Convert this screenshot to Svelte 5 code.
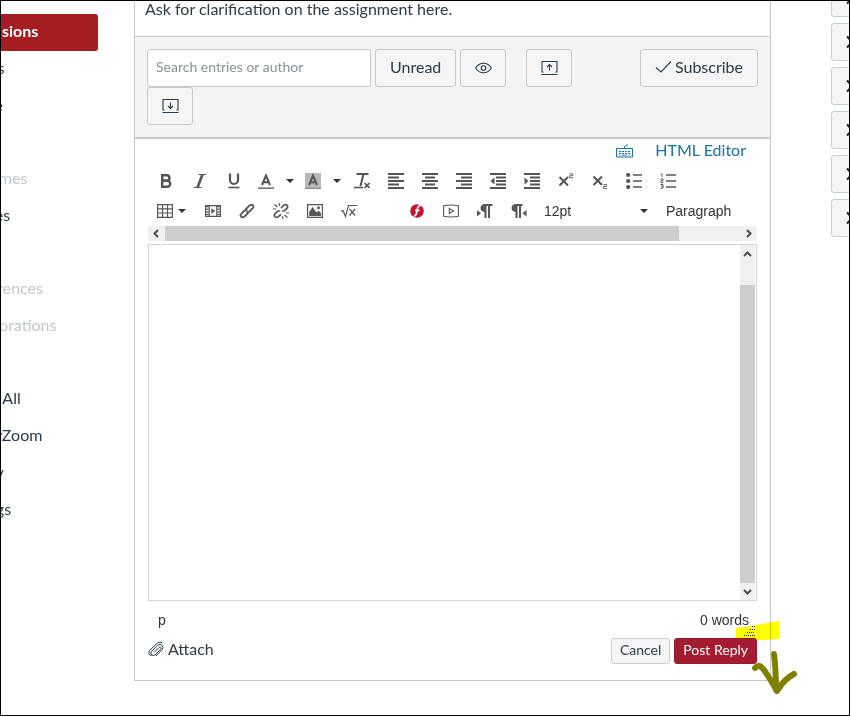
<script>
  const nav = [
    { label: 'Discussions', active: true },
    { label: 'Grades' },
    { label: 'People' },
    { label: '' },
    { label: 'Outcomes', muted: true },
    { label: 'Quizzes' },
    { label: '' },
    { label: 'Conferences', muted: true },
    { label: 'Collaborations', muted: true },
    { label: '' },
    { label: 'Badge All' },
    { label: 'WeberZoom' },
    { label: 'Library' },
    { label: 'Settings' }
  ];
  const rail = [1, 2, 3, 4, 5, 6];
  const rowOne = ['bold', 'italic', 'underline', 'color', 'highlight', 'clear', 'left', 'center', 'right', 'outdent', 'indent', 'sup', 'sub', 'bullets', 'numbers'];
  const rowTwo = ['table', 'video', 'link', 'unlink', 'image', 'math', 'blank', 'flash', 'play', 'ltr', 'rtl'];
  const split = ['color', 'highlight', 'table'];
  const bars = {
    left: ['M0 1H16', 'M0 4.500H11', 'M0 8H16', 'M0 11.500H11', 'M0 15H16'],
    center: ['M0 1H16', 'M3 4.500H13', 'M0 8H16', 'M3 11.500H13', 'M0 15H16'],
    right: ['M0 1H16', 'M5 4.500H16', 'M0 8H16', 'M5 11.500H16', 'M0 15H16'],
    outdent: ['M0 1H16', 'M6 4.500H16', 'M6 8H16', 'M6 11.500H16', 'M0 15H16'],
    indent: ['M0 1H16', 'M6 4.500H16', 'M6 8H16', 'M6 11.500H16', 'M0 15H16']
  };
</script>

{#snippet icon(name)}
  <svg class="ico" width="16" height="16" viewBox="0 0 16 16" aria-hidden="true">
    {#if name === 'bold'}
      <path d="M4.200 1v14M4 2.200h4.700a2.700 2.700 0 0 1 0 5.400H4M4 7.800h5.200a3 3 0 0 1 0 6H4" stroke-width="2.500" />
    {:else if name === 'italic'}
      <path d="M6.500 1.500h7.500M2 14.500h7.500" stroke-width="1.200" /><path d="M10.500 1.500 5.500 14.500" stroke-width="2.600" />
    {:else if name === 'underline'}
      <path d="M4 .5v6.500a4 4 0 0 0 8 0V.5" stroke-width="2.200" /><path d="M2.500 14.500h11" stroke-width="1.600" />
    {:else if name === 'color'}
      <path d="M4 12 8 2.500l4 9.500M5.500 9.200h5" stroke-width="2" /><path d="M0 15.200h16" stroke-width="1.600" stroke="#777" />
    {:else if name === 'highlight'}
      <path d="M0 0h16v16H0z" fill="#b9b9b9" stroke="none" /><path d="M4 12 8 2.500l4 9.500M5.500 9.200h5" stroke-width="2" /><path d="M0 15.400h16" stroke-width="1.200" stroke="#888" />
    {:else if name === 'clear'}
      <path d="M2.500 1h12M9.500 1 6.500 13" stroke-width="2" /><path d="M0 14.500h9" stroke-width="1.600" /><path d="m10.500 10 5 5m0-5-5 5" stroke-width="1.600" />
    {:else if bars[name]}
      <path d={bars[name].join('')} stroke-width="1.800" />
      {#if name === 'outdent'}<path d="M4.500 4.500v7L.500 8z" fill="#555" stroke="none" />{/if}
      {#if name === 'indent'}<path d="M.500 4.500v7l4-3.500z" fill="#555" stroke="none" />{/if}
    {:else if name === 'sup'}
      <path d="m1.500 4 8.500 8.500M10 4l-8.500 8.500" stroke-width="2" /><path d="M11.500.8h3v1.900h-3v2h3.500" stroke-width=".9" />
    {:else if name === 'sub'}
      <path d="m1.500 3.500 8.500 8.500m0-8.500L1.500 12" stroke-width="2" /><path d="M11.500 11.500h3v1.900h-3v2h3.500" stroke-width=".9" />
    {:else if name === 'bullets'}
      <path d="M7 2h9M7 8h9M7 14h9" stroke-width="1.700" /><g fill="#555" stroke="none"><circle cx="2.200" cy="2" r="2.100" /><circle cx="2.200" cy="8" r="2.100" /><circle cx="2.200" cy="14" r="2.100" /></g>
    {:else if name === 'numbers'}
      <path d="M6 2h10M6 8h10M6 14h10" stroke-width="1.700" /><path d="M.5 1h1.500v3M.5 6h2.500v1.700H1v2h2.500M.5 11.500h2.500v3.700H.5M1 13.300h2" stroke-width="1" />
    {:else if name === 'table'}
      <path d="M.6 1.600h14.800v12.800H.6zM.6 5.800h14.800M.6 10h14.800M5.500 1.600v12.800M10.500 1.600v12.800" stroke-width="1.200" />
    {:else if name === 'video'}
      <path d="M.6 2.600h14.800v10.800H.6zM4.200 2.600v10.800M11.800 2.600v10.800" stroke-width="1.200" /><path d="M2.400 3v10M13.600 3v10" stroke-width="2.400" stroke-dasharray="1.200 1.400" /><path d="m6.300 5.200 4 2.800-4 2.800z" fill="#555" stroke="none" />
    {:else if name === 'link'}
      <path d="m6.500 6.500 4.300-4.300q1.500-1.200 3 0 1.400 1.500 0 3L10.500 8.500q-1.500 1.200-3 0M9.500 9.500l-4.300 4.300q-1.500 1.200-3 0-1.400-1.500 0-3L5.500 7.500q1.500-1.200 3 0" stroke-width="1.800" />
    {:else if name === 'unlink'}
      <path d="M8 5 11 2.200q1.500-1.200 3 0 1.300 1.500 0 3L11.500 7.800 9 8M8 11.500 5 13.800q-1.500 1.200-3 0-1.300-1.500 0-3L4.500 8.200 7 8" stroke-width="1.700" /><path d="M1.500 1.500l3 2.500M6 0l.5 3M0 6h3M14.500 14.500l-3-2.500M10 16l-.5-3M16 10h-3" stroke-width="1.200" />
    {:else if name === 'image'}
      <path d="M.6 1.600h14.800v12.800H.6z" stroke-width="1.200" /><path d="M2.200 13V9l3.300-5 4 5.500 2-2 2.400 2.500V13z" fill="#555" stroke="none" /><circle cx="11.500" cy="4.800" r="1.500" fill="#555" stroke="none" />
    {:else if name === 'math'}
      <path d="m0 8.500 2-1 2.500 6L7.500 2.500H16" stroke-width="1.200" /><path d="m8.500 6 5.500 6.500m0-6.500-5.500 6.500" stroke-width="1.200" />
    {:else if name === 'flash'}
      <circle cx="8" cy="8" r="6.800" fill="#c4122f" stroke="none" /><path d="M11.700 3q-2.700-.5-3.200 2.500L7.300 11q-.5 2-2.500 2M6 7.300h4.500" stroke="#fff" stroke-width="1.700" />
    {:else if name === 'play'}
      <path d="M.6 2.800q7.400-1.600 14.800 0v10.400q-7.400 1.600-14.800 0z" stroke-width="1.100" /><path d="m6.300 5.500 4.200 2.500-4.200 2.500z" stroke-width="1.100" />
    {:else if name === 'ltr'}
      <path d="M8.500 1.500V15M12 1.500V15M6 2h9.500" stroke-width="2" /><path d="M9 1v8Q3.500 9 3.500 5T9 1zM0 7v6.500l4-3.250z" fill="#555" stroke="none" />
    {:else if name === 'rtl'}
      <path d="M5.500 1.500V15M9 1.500V15M4 2h7.500" stroke-width="2" /><path d="M6 1v8Q.5 9 .5 5T6 1zM15.500 7v6.500L11.500 10.250z" fill="#555" stroke="none" />
    {/if}
  </svg>
{/snippet}

{#snippet tool(name)}
  {#if name === 'blank'}
    <span class="tool"></span>
  {:else if split.includes(name)}
    <button class="tool split" aria-label={name}>{@render icon(name)}<i class="caret"></i></button>
  {:else}
    <button class="tool" aria-label={name}>{@render icon(name)}</button>
  {/if}
{/snippet}

{#snippet chevron(d)}
  <svg width="15" height="15" viewBox="0 0 15 15" aria-hidden="true"><path {d} fill="none" stroke="#4d4d4d" stroke-width="2" /></svg>
{/snippet}

<div class="page">
  <nav class="side">
    <ul>
      {#each nav as item}
        <li>
          {#if item.label}
            <a href="#top" class:active={item.active} class:muted={item.muted}>{item.label}</a>
          {/if}
        </li>
      {/each}
    </ul>
  </nav>

  <main class="panel">
    <p class="prompt">Ask for clarification on the assignment here.</p>

    <div class="filters">
      <div class="row">
        <input type="text" placeholder="Search entries or author" aria-label="Search entries or author" />
        <button class="btn">Unread</button>
        <button class="btn square" aria-label="Show deleted">
          <svg width="17" height="12" viewBox="0 0 17 12"><path d="M.6 6Q3.500 1.200 8.500 1.200T16.400 6Q13.500 10.800 8.500 10.800T.6 6z" /><circle cx="8.500" cy="6" r="2.300" /></svg>
        </button>
        <button class="btn square apart" aria-label="Collapse replies">
          <svg width="17" height="16" viewBox="0 0 17 16"><path d="M2.500 12H1V1.500h15V12h-1.500M.5 14.500h16M8.500 10.500v-6M6 7l2.500-2.500L11 7" /></svg>
        </button>
        <button class="btn subscribe">
          <svg width="17" height="14" viewBox="0 0 17 14"><path d="m1 7.500 5 4.500L16 1.500" /></svg>Subscribe
        </button>
      </div>
      <button class="btn square" aria-label="Expand replies">
        <svg width="17" height="16" viewBox="0 0 17 16"><path d="M2.500 12H1V1.500h15V12h-1.500M.5 14.500h16M8.500 4.500v6M6 8l2.500 2.500L11 8" /></svg>
      </button>
    </div>

    <section class="composer">
      <div class="switch">
        <a href="#keys" aria-label="Keyboard shortcuts">
          <svg width="17" height="15" viewBox="0 0 17 15"><path d="M.5 5.500h16v8.500H.5zM8.500 5.500V3.500l3.500-2" fill="none" stroke="currentColor" /><path d="M3 8.500h11M3 10.500h11" stroke="currentColor" stroke-dasharray="2 1" /><path d="M3 12.200h1.500M5.500 12.200h6M12.500 12.200H14" stroke="currentColor" stroke-width=".8" /></svg>
        </a>
        <a href="#html">HTML Editor</a>
      </div>

      <div class="tools">
        {#each rowOne as name}{@render tool(name)}{/each}
      </div>
      <div class="tools">
        {#each rowTwo as name}{@render tool(name)}{/each}
        <span class="pick size">
          <select aria-label="Font size"><option>12pt</option></select><i class="caret"></i>
        </span>
        <span class="pick">
          <select aria-label="Block format"><option>Paragraph</option></select>
        </span>
      </div>

      <div class="hbar">
        {@render chevron('M10 4 6.500 7.500 10 11')}
        <div class="track"><div class="hthumb"></div></div>
        {@render chevron('M5 4l3.500 3.500L5 11')}
      </div>

      <div class="edit">
        <textarea aria-label="Reply"></textarea>
        <div class="vbar">
          {@render chevron('M4 9l3.500-3.500L11 9')}
          <div class="vthumb"></div>
          {@render chevron('M4 6l3.500 3.500L11 6')}
        </div>
      </div>

      <div class="status"><span>p</span><span>0 words</span></div>

      <div class="actions">
        <a class="attach" href="#attach">
          <svg width="17" height="17" viewBox="0 0 17 17"><path d="m6 11.500 5-5q1.200-.8 1.800 0 .8 1-.1 1.900l-5.500 5.400q-2 1.500-3.600.1-1.500-1.700 0-3.600l6.200-6.100q2.300-1.600 4.300.1 1.800 2.100 0 4.300L8 15M3.500 14.500q-2 0-2.600-2-.3-2 1-3.400L9.500 2q2.500-1.800 5-.2" fill="none" stroke="#2d3b45" stroke-width="1" /></svg>Attach
        </a>
        <button class="small">Cancel</button>
        <button class="small primary">Post Reply</button>
      </div>
    </section>

    <svg class="marker" width="44" height="20" viewBox="0 0 44 20" aria-hidden="true">
      <path d="M0 7 13 5.500 30 2 43 0v18L30 19H0z" fill="#ff0" />
    </svg>
    <svg class="grip" width="11" height="11" viewBox="0 0 11 11" aria-hidden="true">
      <path d="M8 .5h3M6 3.500h5M3 6.500h8M0 9.500h11" stroke="#222" stroke-width="1" stroke-dasharray="1 1" />
    </svg>
    <svg class="arrow" width="48" height="46" viewBox="0 0 48 46" aria-hidden="true">
      <path d="M23 4Q25 20 25 40M4 18Q8 13 13 20T26 41Q33 29 43 24" fill="none" stroke="#808000" stroke-width="6" stroke-linecap="round" stroke-linejoin="round" />
    </svg>
  </main>

  <aside class="rail">
    {#each rail as n}
      <button aria-label="Expand section {n}">
        <svg width="8" height="14" viewBox="0 0 8 14"><path d="m1 1.500 5.500 5.500L1 12.500" fill="none" stroke="#222" stroke-width="2" /></svg>
      </button>
    {/each}
  </aside>
</div>

<style>
  :global(body) { background: #fff; }
  * { box-sizing: border-box; }
  .page {
    display: flex;
    align-items: flex-start;
    min-height: 100vh;
    border: 1px solid #000;
    overflow: hidden;
    font: 16px/22px Lato, "Liberation Sans", sans-serif;
    color: #2d3b45;
  }
  button, input, select, textarea { font: inherit; color: inherit; margin: 0; }
  a { color: inherit; text-decoration: none; }

  .side { flex: none; width: 97px; margin-top: 13px; }
  .side ul { list-style: none; margin: 0 0 0 -58px; padding: 0; display: grid; grid-template-rows: repeat(14, 1fr); height: 515px; }
  .side a { display: flex; align-items: center; height: 37px; padding: 0 12px 3px; border-radius: 3px; white-space: nowrap; }
  .side .active { background: #a51c21; color: #fff; font-weight: 700; }
  .side .muted { color: #c3c7ca; }

  .panel { position: relative; flex: 1; min-width: 0; margin: 0 60px 0 36px; border: 1px solid #c7c7c7; border-top: 0; }
  .prompt { margin: -3px 0 0; padding: 0 10px 16px; }

  .filters { height: 103px; padding: 12px; background: #f4f4f4; border-top: 1px solid #c7c7c7; border-bottom: 2px solid #c7c7c7; }
  .row { display: flex; gap: 4px; }
  .row input { width: 224px; height: 38px; padding: 0 8px 3px; border: 1px solid #c7c7c7; border-radius: 3px; background: #fff; font-size: 14px; }
  .row input::placeholder { color: #8b9096; opacity: 1; }
  .btn { display: flex; align-items: center; justify-content: center; height: 38px; padding: 0 14px 2px; border: 1px solid #c7cacd; border-radius: 3px; background: #f5f5f5; }
  .btn svg path, .btn svg circle { fill: none; stroke: #2d3b45; stroke-width: 1.1; }
  .square { width: 46px; padding: 0; }
  .apart { margin-left: 16px; }
  .subscribe { margin-left: auto; gap: 3px; }

  .composer { padding: 0 13px 16px; }
  .switch { display: flex; justify-content: flex-end; align-items: center; gap: 22px; height: 27px; padding: 0 11px 5px 0; color: #1770ab; }
  .switch a { display: flex; }

  .tools { display: flex; height: 30px; padding-left: 1px; overflow: hidden; font: 14px/20px "Liberation Sans", Arial, sans-serif; color: #333; }
  .tool { flex: none; display: flex; align-items: center; justify-content: center; width: 34px; height: 30px; padding: 0; border: 0; background: none; }
  .split { width: 47px; justify-content: flex-start; padding-left: 7px; gap: 12px; }
  .split:first-child { padding-left: 8px; gap: 5px; }
  .ico { flex: none; fill: none; stroke: #555; }
  .caret { flex: none; border: 4px solid transparent; border-top-color: #333; border-bottom: 0; }
  .pick { flex: none; display: flex; align-items: center; padding-left: 8px; }
  .pick select { appearance: none; border: 0; padding: 0; background: none; width: 96px; }
  .size { width: 122px; }

  .hbar { display: flex; height: 15px; margin-bottom: 3px; background: #f0f0f0; }
  .hbar .track { flex: 1; padding-left: 2px; }
  .hthumb { width: 89%; height: 15px; background: #cdcdcd; }

  .edit { display: flex; height: 357px; border: 1px solid #d5d5d5; padding-right: 1px; }
  .edit textarea { flex: 1; min-width: 0; border: 0; padding: 8px; resize: none; overflow: hidden; background: #fff; }
  .vbar { display: flex; flex-direction: column; width: 15px; background: #f0f0f0; padding: 2px 0 1px; }
  .vthumb { flex: 1; margin: 23px 0 1px; background: #cdcdcd; }

  .status { display: flex; justify-content: space-between; height: 37px; padding: 9px 8px 0 10px; font: 14px/20px "Liberation Sans", Arial, sans-serif; color: #333; }
  .actions { display: flex; gap: 4px; position: relative; z-index: 2; }
  .attach { display: flex; align-items: center; gap: 3px; margin-right: auto; height: 22px; }
  .small { height: 26px; padding: 0 8px 2px; border: 1px solid #c7cdd1; border-radius: 3px; background: #f5f5f5; font-size: 14px; line-height: 20px; }
  .primary { background: #a51c30; border-color: #941a2b; color: #fff; }

  .marker { position: absolute; right: -10px; bottom: 39px; mix-blend-mode: multiply; }
  .grip { position: absolute; right: 15px; bottom: 43px; }
  .arrow { position: absolute; right: -29px; bottom: -16px; z-index: 3; }

  .rail { flex: none; width: 18px; margin-top: -22px; display: flex; flex-direction: column; gap: 6px; }
  .rail button { display: flex; align-items: center; width: 46px; height: 38px; padding: 0 14px; border: 1px solid #c7cdd1; border-radius: 3px; background: #f5f5f5; }
</style>
